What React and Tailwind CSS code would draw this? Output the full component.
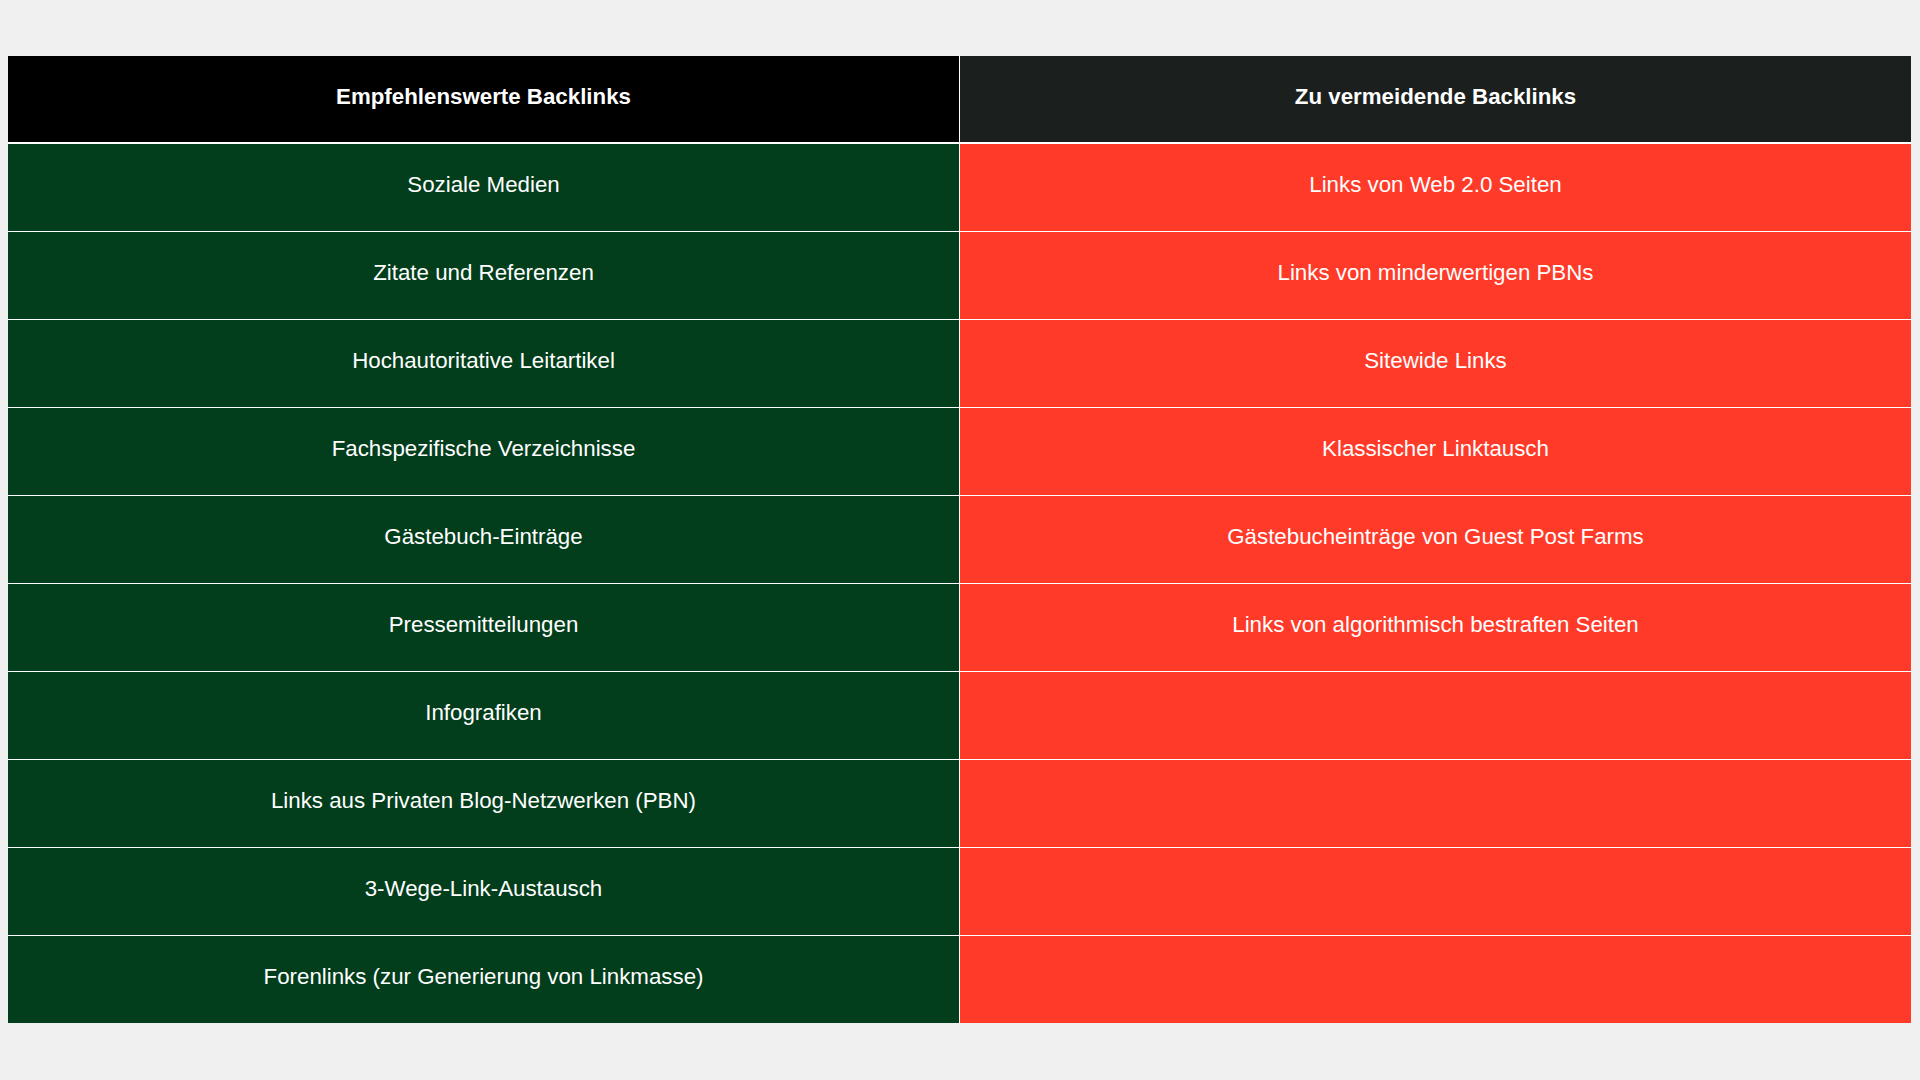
const rows = [
  ["Soziale Medien", "Links von Web 2.0 Seiten"],
  ["Zitate und Referenzen", "Links von minderwertigen PBNs"],
  ["Hochautoritative Leitartikel", "Sitewide Links"],
  ["Fachspezifische Verzeichnisse", "Klassischer Linktausch"],
  ["Gästebuch-Einträge", "Gästebucheinträge von Guest Post Farms"],
  ["Pressemitteilungen", "Links von algorithmisch bestraften Seiten"],
  ["Infografiken", ""],
  ["Links aus Privaten Blog-Netzwerken (PBN)", ""],
  ["3-Wege-Link-Austausch", ""],
  ["Forenlinks (zur Generierung von Linkmasse)", ""],
];

export default function App() {
  return (
    <div className="min-h-screen bg-[#f0f0f0] pt-[56px] pl-2 font-['Liberation_Sans',Arial,sans-serif] text-[22.3px] text-white">
      <div className="grid w-[1903px] grid-cols-[951px_951px] gap-px bg-white">
        {/* HEADER */}
        <div className="mb-px flex h-[86px] items-center justify-center bg-black pb-[5px] font-bold">
          Empfehlenswerte Backlinks
        </div>
        <div className="mb-px flex h-[86px] items-center justify-center bg-[#1b1f1e] pb-[5px] font-bold">
          Zu vermeidende Backlinks
        </div>

        {/* BODY */}
        {rows.map(([good, bad]) => (
          <div key={good} className="contents">
            <div className="flex h-[87px] items-center justify-center bg-[#023d1c] pb-[5px]">
              {good}
            </div>
            <div className="flex h-[87px] items-center justify-center bg-[#ff3a28] pb-[5px]">
              {bad}
            </div>
          </div>
        ))}
      </div>
    </div>
  );
}
